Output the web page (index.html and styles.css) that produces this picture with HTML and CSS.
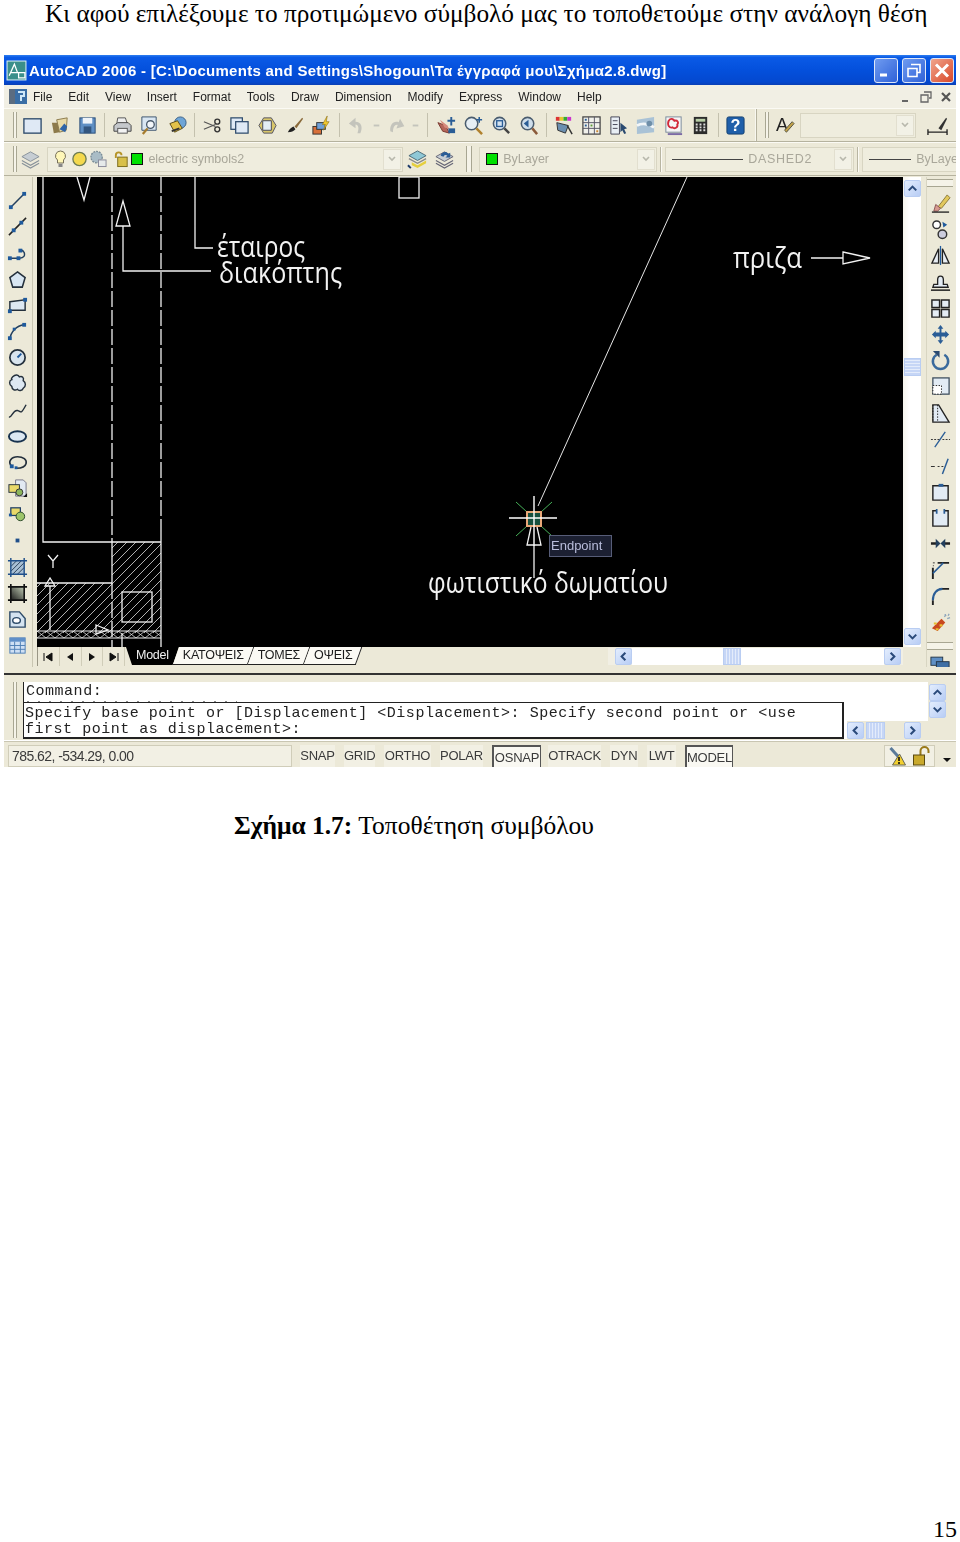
FILE: index.html
```html
<!DOCTYPE html>
<html lang="el">
<head>
    <meta charset="UTF-8">
    <title>Τοποθέτηση συμβόλου</title>
    <link rel="stylesheet" href="styles.css">
</head>
<body>
<div class="page">
    <p class="lead">Κι αφού επιλέξουμε το προτιμώμενο σύμβολό μας το τοποθετούμε στην ανάλογη θέση</p>

    <div class="window">
        <!-- title bar -->
        <div class="titlebar">
            <svg class="app-icon" viewBox="0 0 20 20"><rect x="1" y="1" width="18" height="18" fill="#3b8f8a" stroke="#d8eef0"/><path d="M3 15 8 4l3 8M12 12h6v5h-6zM4 12h8" fill="none" stroke="#fff" stroke-width="1.2"/></svg>
            <span class="title-text">AutoCAD 2006 - [C:\Documents and Settings\Shogoun\Τα έγγραφά μου\Σχήμα2.8.dwg]</span>
            <div class="win-btns">
                <span class="win-btn"><svg viewBox="0 0 22 22"><rect x="5" y="14" width="7" height="3" fill="#fff"/></svg></span>
                <span class="win-btn"><svg viewBox="0 0 22 22"><path d="M8 5h9v8h-3M5 9h9v8H5z" fill="none" stroke="#fff" stroke-width="1.6"/></svg></span>
                <span class="win-btn close"><svg viewBox="0 0 22 22"><path d="M5 5l12 12M17 5 5 17" stroke="#fff" stroke-width="3"/></svg></span>
            </div>
        </div>

        <!-- menu -->
        <div class="menubar">
            <svg class="doc-icon" viewBox="0 0 20 18"><rect x="1" y="1" width="18" height="15" fill="#3a6ea5"/><rect x="1" y="1" width="6" height="15" fill="#5b6c80"/><path d="M10 4h6v4h-3v5" fill="none" stroke="#cfe8f8" stroke-width="2"/></svg>
            <span>File</span><span>Edit</span><span>View</span><span>Insert</span><span>Format</span><span>Tools</span><span>Draw</span><span>Dimension</span><span>Modify</span><span>Express</span><span>Window</span><span>Help</span>
            <div class="doc-btns">
                <svg viewBox="0 0 14 14"><rect x="3" y="10" width="6" height="2" fill="#666"/></svg>
                <svg viewBox="0 0 14 14"><path d="M5 2h7v6h-2M2 5h7v7H2z" fill="none" stroke="#666" stroke-width="1.3"/></svg>
                <svg viewBox="0 0 14 14"><path d="M3 3l8 8M11 3l-8 8" stroke="#555" stroke-width="2.2"/></svg>
            </div>
        </div>

        <!-- standard toolbar -->
        <div class="toolbar tb-standard">
            <span class="grip"></span>
            <span class="tool"><svg viewBox="0 0 22 22"><rect x="2" y="4" width="18" height="15" fill="#dfe9f5" stroke="#2d4a6b" stroke-width="1.4"/></svg></span>
            <span class="tool"><svg viewBox="0 0 22 22"><path d="M2 8h6l2 10-6 1z" fill="#8d7a4a"/><path d="M7 5l11-2-1 13-7 2z" fill="#e8d9a6" stroke="#8a7a4c"/><path d="M10 15l5-6 3 3-2 6z" fill="#2f64a8"/></svg></span>
            <span class="tool"><svg viewBox="0 0 22 22"><rect x="3" y="3" width="16" height="16" fill="#5f8fc4" stroke="#2a4d78"/><rect x="6" y="3" width="10" height="6" fill="#eef3f9"/><rect x="7" y="12" width="8" height="7" fill="#33567f"/></svg></span>
            <span class="tb-sep"></span>
            <span class="tool"><svg viewBox="0 0 22 22"><path d="M6 3h8l2 6H5z" fill="#eee" stroke="#555"/><path d="M2 11l4-3h11l3 3v6H2z" fill="#c5c8cc" stroke="#444"/><rect x="6" y="14" width="10" height="5" fill="#f3f3f3" stroke="#555"/></svg></span>
            <span class="tool"><svg viewBox="0 0 22 22"><path d="M3 2h15v14H3z" fill="#d9e6f2" stroke="#3b536d"/><circle cx="12" cy="10" r="4" fill="#f2f6fa" stroke="#4a5a6c" stroke-width="1.4"/><path d="M9 14l-5 6" stroke="#a67c2e" stroke-width="2.4"/></svg></span>
            <span class="tool"><svg viewBox="0 0 22 22"><circle cx="14" cy="8" r="6" fill="#6fa5d6" stroke="#3a5f86"/><path d="M3 9l8-3 5 8-8 4z" fill="#e3c24a" stroke="#5c4c16"/><path d="M5 17l8-3" stroke="#333" stroke-width="2"/></svg></span>
            <span class="tb-sep"></span>
            <span class="tool"><svg viewBox="0 0 22 22"><path d="M2 7l12 5M2 15l12-5" stroke="#555" stroke-width="1.2"/><circle cx="16" cy="7" r="2.6" fill="none" stroke="#333" stroke-width="1.4"/><circle cx="16" cy="15" r="2.6" fill="none" stroke="#333" stroke-width="1.4"/></svg></span>
            <span class="tool"><svg viewBox="0 0 22 22"><rect x="2" y="3" width="12" height="12" fill="#dfe9f5" stroke="#2d4a6b" stroke-width="1.3"/><rect x="7" y="7" width="13" height="12" fill="#dfe9f5" stroke="#2d4a6b" stroke-width="1.3"/></svg></span>
            <span class="tool"><svg viewBox="0 0 22 22"><path d="M7 3h8l5 8-4 8H7L2 11z" fill="#d8c66a" stroke="#556"/><path d="M6 6h9v10H6z" fill="#e4edf5" stroke="#445"/></svg></span>
            <span class="tool"><svg viewBox="0 0 22 22"><path d="M4 18c2-4 4-5 6-6l2 3c-2 2-4 3-8 3z" fill="#222"/><path d="M11 12l8-9 1 1-7 10z" fill="#8a6a3a"/></svg></span>
            <span class="tool"><svg viewBox="0 0 22 22"><rect x="2" y="12" width="9" height="8" fill="#d8703a" stroke="#333"/><rect x="6" y="8" width="9" height="7" fill="#6fa0d8" stroke="#333"/><path d="M17 1l-5 9h3l-2 6 6-9h-3z" fill="#f1c82e" stroke="#8a6d10" stroke-width=".6"/></svg></span>
            <span class="tb-sep"></span>
            <span class="tool"><svg viewBox="0 0 22 22"><path d="M7 19C4 13 6 7 12 7V3l7 6-7 5v-4c-3 0-4 4-2 9z" transform="matrix(-1 0 0 1 22 0)" fill="#c4c4bc"/></svg></span>
            <span class="tool tiny"><svg viewBox="0 0 16 22"><rect x="5" y="10" width="6" height="2" fill="#c4c4bc"/></svg></span>
            <span class="tool"><svg viewBox="0 0 22 22"><path d="M7 19C4 13 6 7 12 7V3l7 6-7 5v-4c-3 0-4 4-2 9z" fill="#c4c4bc" transform="rotate(20 11 11)"/></svg></span>
            <span class="tool tiny"><svg viewBox="0 0 16 22"><rect x="5" y="10" width="6" height="2" fill="#c4c4bc"/></svg></span>
            <span class="tb-sep narrow"></span>
            <span class="tool"><svg viewBox="0 0 22 22"><path d="M2 8l8 3 4 8-7-2z" fill="#b5655a" stroke="#7a3a30"/><path d="M4 5l8 6 2 4-5-2z" fill="#d68a7c"/><path d="M16 2v9M12 6h8" stroke="#2a5d96" stroke-width="2"/><rect x="13" y="14" width="7" height="5" fill="#2a5d96"/></svg></span>
            <span class="tool"><svg viewBox="0 0 22 22"><circle cx="9" cy="9" r="6.5" fill="#e6eef5" stroke="#4a5c6e" stroke-width="1.6"/><path d="M14 14l6 6" stroke="#b0812e" stroke-width="2.6"/><path d="M17 2v6M14 5h6" stroke="#2a5d96" stroke-width="1.6"/></svg></span>
            <span class="tool"><svg viewBox="0 0 22 22"><circle cx="9" cy="9" r="6.5" fill="#d5e3f0" stroke="#4a5c6e" stroke-width="1.6"/><rect x="6" y="6" width="6" height="6" fill="none" stroke="#2a5d96" stroke-width="1.4"/><path d="M14 14l5 5" stroke="#444" stroke-width="2.6"/></svg></span>
            <span class="tool"><svg viewBox="0 0 22 22"><circle cx="10" cy="9" r="6.5" fill="#cfdeeb" stroke="#4a5c6e" stroke-width="1.6"/><path d="M6 9l5-4v8z" fill="#2a5d96"/><path d="M15 14l5 6" stroke="#8b5a3a" stroke-width="2.6"/></svg></span>
            <span class="tb-sep"></span>
            <span class="tool"><svg viewBox="0 0 22 22"><rect x="3" y="2" width="4" height="4" fill="#d33"/><rect x="7" y="2" width="4" height="4" fill="#e5c82e"/><rect x="11" y="2" width="4" height="4" fill="#3a3"/><rect x="15" y="2" width="4" height="4" fill="#c3c"/><path d="M4 8l12 3-3 8-8-3z" fill="#6b8fb0" stroke="#333"/><path d="M15 11l5 9" stroke="#333" stroke-width="1.6"/></svg></span>
            <span class="tool"><svg viewBox="0 0 22 22"><rect x="2" y="2" width="18" height="18" fill="#f0f0ea" stroke="#444" stroke-width="1.3"/><path d="M2 8h18M2 14h18M8 2v18M14 2v18" stroke="#556"/><rect x="4" y="4" width="2" height="2" fill="#2a5d96"/><rect x="4" y="10" width="2" height="2" fill="#2a5d96"/><rect x="10" y="10" width="2" height="2" fill="#5a9a3a"/><rect x="16" y="16" width="2" height="2" fill="#c83"/></svg></span>
            <span class="tool"><svg viewBox="0 0 22 22"><path d="M3 2h9v18H3z" fill="#e8eef4" stroke="#445"/><path d="M5 6h5M5 10h5M5 14h5" stroke="#445"/><path d="M13 8l7 6-3 1 2 4-2 1-2-4-2 2z" fill="#2a4a70"/></svg></span>
            <span class="tool"><svg viewBox="0 0 22 22"><path d="M2 5l18-3v16L2 20z" fill="#a9c2d6"/><path d="M2 11c6-3 12-2 18 2" stroke="#f2f6f8" stroke-width="3" fill="none"/><circle cx="15" cy="9" r="3" fill="#6e8ea8"/></svg></span>
            <span class="tool"><svg viewBox="0 0 22 22"><rect x="3" y="2" width="16" height="16" fill="#f5f5f5" stroke="#7a8a9a"/><path d="M6 6c2-3 5-2 6 0 3-1 5 2 3 4 1 3-3 5-5 3-3 1-6-2-4-7z" fill="none" stroke="#d22a3a" stroke-width="2"/><path d="M5 20h15" stroke="#7a6aa5" stroke-width="2"/></svg></span>
            <span class="tool"><svg viewBox="0 0 22 22"><rect x="4" y="2" width="14" height="18" fill="#2c2c2c"/><rect x="6" y="4" width="10" height="3" fill="#b9cfa8"/><path d="M6 10h2M10 10h2M14 10h2M6 13h2M10 13h2M14 13h2M6 16h2M10 16h2M14 16h2" stroke="#ddd" stroke-width="2"/></svg></span>
            <span class="tb-sep"></span>
            <span class="tool"><svg viewBox="0 0 22 22"><rect x="2" y="2" width="18" height="18" rx="2" fill="#1f5faa" stroke="#14406f"/><text x="11" y="17" class="help-q">?</text></svg></span>
            <span class="tb-edge"></span>
            <span class="grip second"></span>
            <span class="tool"><svg viewBox="0 0 22 22"><text x="1" y="17" class="a-glyph">A</text><path d="M12 18l8-9-2-2-8 9z" fill="#c2a24a" stroke="#554"/></svg></span>
            <span class="combo blank"><span class="combo-drop"><svg viewBox="0 0 12 12"><path d="M3 4l3 3 3-3" fill="none" stroke="#b8b8ac" stroke-width="1.6"/></svg></span></span>
            <span class="tool last"><svg viewBox="0 0 22 22"><path d="M12 14l8-11 1 1-6 12z" fill="#333"/><path d="M1 18h20M1 15v6M21 15v6" stroke="#222" stroke-width="1.4"/></svg></span>
        </div>

        <!-- layers and properties -->
        <div class="toolbar tb-layers">
            <span class="grip"></span>
            <span class="tool"><svg viewBox="0 0 22 22"><path d="M11 3l9 5-9 5-9-5z" fill="#c6cdd3" stroke="#88929a"/><path d="M2 12l9 5 9-5M2 15l9 5 9-5" fill="none" stroke="#88929a" stroke-width="1.2"/></svg></span>
            <span class="combo layer">
                <svg class="state" viewBox="0 0 16 20"><path d="M8 2a5 5 0 0 1 3 9v3H5v-3a5 5 0 0 1 3-9z" fill="#fff7b8" stroke="#77705a"/><rect x="6" y="15" width="4" height="3" fill="#888"/></svg>
                <svg class="state" viewBox="0 0 18 20"><circle cx="9" cy="10" r="7" fill="#f4d94e" stroke="#6d7c52" stroke-width="1.4"/></svg>
                <svg class="state" viewBox="0 0 18 20"><circle cx="7" cy="8" r="6" fill="#a9bcc6" stroke="#7a8c96" stroke-dasharray="2 1" stroke-width="1.4"/><rect x="9" y="11" width="8" height="7" fill="#e6eaea" stroke="#889"/></svg>
                <svg class="state wide" viewBox="0 0 18 20"><path d="M3 9V6a3 3 0 0 1 6 0" fill="none" stroke="#b69428" stroke-width="2"/><rect x="5" y="8" width="10" height="10" fill="#d8c04a" stroke="#7a6a1a"/></svg>
                <span class="swatch"></span>
                <span class="combo-text">electric symbols2</span>
                <span class="combo-drop"><svg viewBox="0 0 12 12"><path d="M3 4l3 3 3-3" fill="none" stroke="#b8b8ac" stroke-width="1.6"/></svg></span>
            </span>
            <span class="tool"><svg viewBox="0 0 22 22"><path d="M11 2l9 5-9 5-9-5z" fill="#8fc8d6" stroke="#4a6a78"/><path d="M2 10l9 5 9-5" fill="none" stroke="#888" stroke-width="1.4"/><path d="M5 14l6 3 9-5v3l-9 5-6-3z" fill="#e5cf3e"/><path d="M1 17l3 3" stroke="#1c3a6a" stroke-width="2"/></svg></span>
            <span class="tool"><svg viewBox="0 0 22 22"><path d="M11 3l9 5-9 5-9-5z" fill="#c6cdd3" stroke="#667"/><path d="M2 12l9 5 9-5M2 15l9 5 9-5" fill="none" stroke="#667" stroke-width="1.2"/><path d="M7 7c1-4 6-5 8-2l2-1v5h-5l2-2c-1-1-3-1-4 1z" fill="#2a5d96"/></svg></span>
            <span class="grip small"></span>
            <span class="combo prop">
                <span class="swatch"></span>
                <span class="combo-text">ByLayer</span>
                <span class="combo-drop"><svg viewBox="0 0 12 12"><path d="M3 4l3 3 3-3" fill="none" stroke="#b8b8ac" stroke-width="1.6"/></svg></span>
            </span>
            <span class="divider"></span>
            <span class="combo linetype">
                <span class="rule"></span>
                <span class="combo-text spaced">DASHED2</span>
                <span class="combo-drop"><svg viewBox="0 0 12 12"><path d="M3 4l3 3 3-3" fill="none" stroke="#b8b8ac" stroke-width="1.6"/></svg></span>
            </span>
            <span class="divider"></span>
            <span class="combo lineweight">
                <span class="rule short"></span>
                <span class="combo-text">ByLayer</span>
            </span>
        </div>

        <!-- drawing area with both tool columns -->
        <div class="work">
            <div class="side side-left">
                <svg viewBox="0 0 22 22"><path d="M4 18 18 4" stroke="#24405e" stroke-width="1.6"/><rect x="2" y="16" width="4" height="4" fill="#1f5a9c"/><rect x="16" y="2" width="4" height="4" fill="#1f5a9c"/></svg>
                <svg viewBox="0 0 22 22"><path d="M2 20 20 2" stroke="#222" stroke-width="1.6"/><rect x="5" y="13" width="4" height="4" fill="#1f5a9c"/><rect x="13" y="5" width="4" height="4" fill="#1f5a9c"/></svg>
                <svg viewBox="0 0 22 22"><path d="M3 17h10c5 0 6-3 5-6-1-2-3-3-5-2" fill="none" stroke="#24405e" stroke-width="1.5"/><rect x="1" y="15" width="4" height="4" fill="#1f5a9c"/><rect x="10" y="15" width="4" height="4" fill="#1f5a9c"/><rect x="12" y="7" width="4" height="4" fill="#1f5a9c"/></svg>
                <svg viewBox="0 0 22 22"><path d="M11 3l8 6-3 10H6L3 9z" fill="#d8e6f2" stroke="#24303c" stroke-width="1.6"/></svg>
                <svg viewBox="0 0 22 22"><path d="M3 7l16-2v11H3z" fill="#dde8f2" stroke="#24303c" stroke-width="1.5"/><rect x="17" y="3" width="4" height="4" fill="#1f5a9c"/><rect x="1" y="15" width="4" height="4" fill="#1f5a9c"/></svg>
                <svg viewBox="0 0 22 22"><path d="M3 19C4 11 10 5 18 4" fill="none" stroke="#24405e" stroke-width="1.6"/><rect x="1" y="16" width="4" height="4" fill="#1f5a9c"/><rect x="16" y="2" width="4" height="4" fill="#1f5a9c"/><rect x="6" y="7" width="3" height="3" fill="#1f5a9c"/></svg>
                <svg viewBox="0 0 22 22"><circle cx="11" cy="11" r="8" fill="#d8e4ee" stroke="#24303c" stroke-width="1.8"/><path d="M11 11l4-4" stroke="#1f5a9c" stroke-width="2"/></svg>
                <svg viewBox="0 0 22 22"><path d="M6 4c3-3 6-2 7 0 3-1 5 1 4 4 3 2 3 6 0 8-1 3-5 3-6 1-3 2-6 0-6-3-3-2-3-6 0-7-1-1 0-2 1-3z" fill="#dde8f2" stroke="#24303c" stroke-width="1.5"/></svg>
                <svg viewBox="0 0 22 22"><path d="M2 18c4 0 4-8 9-7 4 1 3 5 9-6" fill="none" stroke="#24303c" stroke-width="1.5"/></svg>
                <svg viewBox="0 0 22 22"><ellipse cx="11" cy="11" rx="9" ry="5.5" fill="#dce8f2" stroke="#17324e" stroke-width="2"/></svg>
                <svg viewBox="0 0 22 22"><path d="M5 15C0 10 5 5 11 5s10 3 9 7-6 5-10 5" fill="none" stroke="#24303c" stroke-width="1.7"/><rect x="3" y="13" width="4" height="4" fill="#1f5a9c"/><rect x="8" y="15" width="3" height="3" fill="#1f5a9c"/></svg>
                <svg viewBox="0 0 22 22"><path d="M9 2h8l3 3v14H9z" fill="#e2e9f2" stroke="#778"/><rect x="2" y="7" width="11" height="8" fill="#e9d96a" stroke="#24303c"/><circle cx="13" cy="15" r="3.6" fill="#8cb65c" stroke="#333"/><path d="M17 20h4v-4z" fill="#111"/></svg>
                <svg viewBox="0 0 22 22"><rect x="4" y="4" width="10" height="8" fill="#e9d96a" stroke="#1f3f66" stroke-width="1.3"/><circle cx="14" cy="13" r="4.5" fill="#9dc56a" stroke="#2c4a2c"/><rect x="2" y="10" width="3" height="3" fill="#1f5a9c"/></svg>
                <svg viewBox="0 0 22 22"><rect x="9" y="9" width="4" height="4" fill="#1f4f8a"/></svg>
                <svg viewBox="0 0 22 22"><rect x="4" y="4" width="14" height="14" fill="#a8bfd4"/><path d="M4 10l6-6M4 15l11-11M6 18 18 6M11 18l7-7" stroke="#2a3e55"/><path d="M4 1v20M18 1v20M1 4h20M1 18h20" stroke="#1f4f8a" stroke-width="1.5"/></svg>
                <svg viewBox="0 0 22 22"><defs><linearGradient id="gr" x1="0" y1="1" x2="1" y2="0"><stop offset="0" stop-color="#1a1a1a"/><stop offset="1" stop-color="#c2cdb5"/></linearGradient></defs><rect x="4" y="4" width="14" height="14" fill="url(#gr)"/><path d="M4 1v20M18 1v20M1 4h20M1 18h20" stroke="#111" stroke-width="1.7"/></svg>
                <svg viewBox="0 0 22 22"><path d="M3 3h10l6 7v9H3z" fill="#d4e3f0" stroke="#2c4a68" stroke-width="1.5"/><ellipse cx="10" cy="12" rx="4" ry="3" fill="#fff" stroke="#2c4a68" stroke-width="1.5"/></svg>
                <svg viewBox="0 0 22 22"><rect x="3" y="3" width="16" height="16" fill="#cfe0f4" stroke="#4f7fb5"/><rect x="3" y="3" width="16" height="4" fill="#5f8fc8"/><path d="M3 11h16M3 15h16M8 7v12M14 7v12" stroke="#4f7fb5"/></svg>
                <i class="side-stub"></i>
            </div>

            <div class="main">
                <div class="view">
                    <svg class="drawing" viewBox="37 177 866 470">
                        <defs>
                            <pattern id="hatch" width="9" height="9" patternUnits="userSpaceOnUse" patternTransform="translate(37 542)">
                                <path d="M-2 11 11 -2M-2 2 2 -2M7 11 11 7" stroke="#dcdcdc" stroke-width=".8"/>
                            </pattern>
                            <pattern id="xrow" width="9" height="7" patternUnits="userSpaceOnUse" patternTransform="translate(37 631)">
                                <path d="M0 0 9 7M9 0 0 7" stroke="#ddd" stroke-width=".8"/>
                            </pattern>
                        </defs>

                        <path d="M112 542H161V633H37V583H112Z" fill="url(#hatch)"/>
                        <rect x="37" y="631" width="124" height="7" fill="url(#xrow)"/>
                        <path d="M37 631H161M37 638H161" stroke="#eee"/>
                        <path d="M43 177V542H161M112 542V583H37" class="ln"/>
                        <path d="M112 177V542M112 583V647M161 177V532" class="ln dash"/>
                        <path d="M161 532V647" class="ln"/>
                        <rect x="122" y="592" width="30" height="30" class="ln"/>

                        <!-- left arrows and labels -->
                        <path d="M77 177 84 200 90 177" class="ln"/>
                        <path d="M123 201 116 226H130Z M123 226V271H211M195 177V248H213" class="ln"/>
                        <rect x="399" y="177" width="20" height="21" class="ln"/>
                        <text x="217" y="257" class="lbl" textLength="88" lengthAdjust="spacingAndGlyphs">έταιρος</text>
                        <text x="219" y="283" class="lbl" textLength="123" lengthAdjust="spacingAndGlyphs">διακόπτης</text>

                        <!-- ucs icon -->
                        <path d="M50 578 45 586H55Z M50 586V630M96 625 108 630 96 634ZM122 633V647" class="ln"/>
                        <path d="M48 555 53 561 58 555M53 561V568" class="ln"/>

                        <!-- outlet -->
                        <text x="733" y="268" class="lbl" textLength="69" lengthAdjust="spacingAndGlyphs">πριζα</text>
                        <path d="M811 258H843M843 252 870 258 843 264Z" class="ln"/>

                        <!-- pick line and snap marker -->
                        <path d="M687 177 538 506" class="ln thin"/>
                        <path d="M516 502 527 512M552 502 541 512M516 536 527 526M552 536 541 526" stroke="#46b058"/>
                        <rect x="527" y="512" width="14" height="14" fill="#15503e" stroke="#e8a878" stroke-width="2"/>
                        <path d="M509 518H557M534 496V546" stroke="#fff" stroke-width="1.4"/>
                        <path d="M531 527 527 545H541L537 527M534 545V578" class="ln"/>
                        <text x="428" y="593" class="lbl" textLength="240" lengthAdjust="spacingAndGlyphs">φωτιστικό δωματίου</text>
                        <rect x="549.500" y="535.500" width="62" height="21" fill="#1c2032" stroke="#575d78"/>
                        <text x="551" y="550" class="tip">Endpoint</text>
                    </svg>
                    <div class="vscroll">
                        <span class="sbtn"><svg viewBox="0 0 16 16"><path d="M4 10l4-4 4 4" fill="none" stroke="#2a4a7a" stroke-width="2.2"/></svg></span>
                        <span class="vtrack"><span class="vthumb"></span></span>
                        <span class="sbtn"><svg viewBox="0 0 16 16"><path d="M4 6l4 4 4-4" fill="none" stroke="#2a4a7a" stroke-width="2.2"/></svg></span>
                    </div>
                </div>

                <div class="tabsrow">
                    <div class="tabnav">
                        <span><svg viewBox="0 0 12 12"><path d="M2 2v8M10 2 4 6l6 4z" stroke="#111" fill="#111"/></svg></span>
                        <span><svg viewBox="0 0 12 12"><path d="M9 2 3 6l6 4z" fill="#111"/></svg></span>
                        <span><svg viewBox="0 0 12 12"><path d="M3 2l6 4-6 4z" fill="#111"/></svg></span>
                        <span><svg viewBox="0 0 12 12"><path d="M10 2v8M2 2l6 4-6 4z" stroke="#111" fill="#111"/></svg></span>
                    </div>
                    <span class="tab active">Model</span>
                    <span class="tab">ΚΑΤΟΨΕΙΣ</span>
                    <span class="tab">ΤΟΜΕΣ</span>
                    <span class="tab">ΟΨΕΙΣ</span>
                    <div class="hscroll">
                        <span class="sbtn"><svg viewBox="0 0 16 16"><path d="M10 4 6 8l4 4" fill="none" stroke="#2a4a7a" stroke-width="2.2"/></svg></span>
                        <span class="htrack"><span class="hthumb"></span></span>
                        <span class="sbtn"><svg viewBox="0 0 16 16"><path d="M6 4l4 4-4 4" fill="none" stroke="#2a4a7a" stroke-width="2.2"/></svg></span>
                    </div>
                </div>
            </div>

            <div class="side side-right">
                <i class="side-grip"></i>
                <svg viewBox="0 0 22 22"><path d="M8 15 18 2l3 3-9 11z" fill="#e2c85c" stroke="#8a7a3a"/><path d="M6 12l5 4-3 3H4z" fill="#d89a90" stroke="#855"/><path d="M2 20h18" stroke="#222" stroke-width="1.4"/></svg>
                <svg viewBox="0 0 22 22"><circle cx="7" cy="6" r="4" fill="#fff" stroke="#333" stroke-width="1.5"/><circle cx="13" cy="16" r="4.5" fill="#ccd" stroke="#333" stroke-width="1.5"/><path d="M13 3l5 3-4 3z" fill="#1f5a9c"/></svg>
                <svg viewBox="0 0 22 22"><path d="M9 4 2 19h7zM13 4l7 15h-7z" fill="#e8eef4" stroke="#222" stroke-width="1.4"/><path d="M11 1v20" stroke="#1f5a9c" stroke-width="1.3"/></svg>
                <svg viewBox="0 0 22 22"><path d="M4 13h4V8c0-5 6-5 6 0v5h4l1 3H3z" fill="#e4ecf4" stroke="#222" stroke-width="1.4"/><path d="M1 19h20" stroke="#222" stroke-width="1.6"/></svg>
                <svg viewBox="0 0 22 22"><path d="M2 2h8v8H2zM12 2h8v8h-8zM2 12h8v8H2zM12 12h8v8h-8z" fill="#e4ecf4" stroke="#222" stroke-width="1.5"/></svg>
                <svg viewBox="0 0 22 22"><path d="M11 1l3 4h-2v4h4V7l4 4-4 4v-2h-4v4h2l-3 4-3-4h2v-4H6v2l-4-4 4-4v2h4V5H8z" fill="#2a5d96"/></svg>
                <svg viewBox="0 0 22 22"><path d="M7 5a8 8 0 1 0 8 0" fill="none" stroke="#3a6a9c" stroke-width="2.6"/><path d="M3 1h7v7z" fill="#2a4a70"/></svg>
                <svg viewBox="0 0 22 22"><rect x="3" y="2" width="17" height="17" fill="#e2ebf4" stroke="#3a4a5a" stroke-width="1.3"/><rect x="3" y="10" width="9" height="9" fill="#fff" stroke="#222" stroke-dasharray="1.5 1.5"/></svg>
                <svg viewBox="0 0 22 22"><path d="M3 2h6l11 18H3z" fill="#e2ebf4" stroke="#222" stroke-width="1.4"/><path d="M3 2v18M8 2v18" stroke="#222" stroke-dasharray="1.5 1.5"/></svg>
                <svg viewBox="0 0 22 22"><path d="M5 19 16 3" stroke="#2a5d96" stroke-width="1.4"/><path d="M1 11h9M13 11h8" stroke="#333" stroke-dasharray="2 1.4"/></svg>
                <svg viewBox="0 0 22 22"><path d="M13 20 19 4" stroke="#2a5d96" stroke-width="1.5"/><path d="M1 12h4M8 12h2M12 12h2" stroke="#333" stroke-width="1.2"/></svg>
                <svg viewBox="0 0 22 22"><path d="M3 5h16v15H3z" fill="#e2ebf4" stroke="#222" stroke-width="1.5"/><rect x="9" y="3" width="5" height="3" fill="#2a5d96"/></svg>
                <svg viewBox="0 0 22 22"><path d="M7 4H3v16h16V4h-4" fill="#e2ebf4" stroke="#222" stroke-width="1.5"/><path d="M7 2v5M15 2v5" stroke="#2a5d96" stroke-width="1.8"/></svg>
                <svg viewBox="0 0 22 22"><path d="M1 11h6M15 11h6" stroke="#222" stroke-width="2.4"/><path d="M6 6l5 5-5 5zM16 6l-5 5 5 5z" fill="#24405e"/></svg>
                <svg viewBox="0 0 22 22"><path d="M3 20V8M8 3h12" stroke="#222" stroke-width="2"/><path d="M3 3h2M3 6h1" stroke="#333"/><path d="M3 14 14 3" stroke="#2a5d96" stroke-width="1.6"/></svg>
                <svg viewBox="0 0 22 22"><path d="M3 20v-5M10 3h10" stroke="#222" stroke-width="2"/><path d="M3 15C3 8 7 3 13 3" fill="none" stroke="#2a5d96" stroke-width="2.2"/></svg>
                <svg viewBox="0 0 22 22"><path d="M2 17 12 7l4 4-8 9z" fill="#c9491f"/><path d="M4 12h3M6 18h3M10 14h3" stroke="#e8c030" stroke-width="2.2"/><path d="M15 5l2-2M18 7l3-1M16 2v2M20 2l-1 2" stroke="#8ea6bb" stroke-width="1.4"/></svg>
                <i class="side-grip low"></i>
                <svg class="cascade" viewBox="0 0 22 16"><rect x="1" y="1" width="13" height="9" fill="#5f8fc4" stroke="#234"/><rect x="7" y="6" width="14" height="9" fill="#3f6fa5" stroke="#234"/></svg>
            </div>
        </div>

        <!-- command line -->
        <div class="cmdline">
            <span class="grip tall"></span>
            <div class="cmd-box">
                <div class="cmd-history">Command:<i class="cut-line"></i></div>
                <div class="cmd-input">Specify base point or [Displacement] &lt;Displacement&gt;: Specify second point or &lt;use<br>first point as displacement&gt;:</div>
                <div class="cmd-hbar">
                    <span class="sbtn"><svg viewBox="0 0 16 16"><path d="M10 4 6 8l4 4" fill="none" stroke="#2a4a7a" stroke-width="2.2"/></svg></span>
                    <span class="cmd-thumb"></span>
                    <span class="sbtn end"><svg viewBox="0 0 16 16"><path d="M6 4l4 4-4 4" fill="none" stroke="#2a4a7a" stroke-width="2.2"/></svg></span>
                </div>
            </div>
            <div class="cmd-vbar">
                <span class="sbtn"><svg viewBox="0 0 16 16"><path d="M4 10l4-4 4 4" fill="none" stroke="#2a4a7a" stroke-width="2.2"/></svg></span>
                <span class="sbtn"><svg viewBox="0 0 16 16"><path d="M4 6l4 4 4-4" fill="none" stroke="#2a4a7a" stroke-width="2.2"/></svg></span>
            </div>
        </div>

        <!-- status bar -->
        <div class="statusbar">
            <span class="coords">785.62, -534.29, 0.00</span>
            <span class="st w35">SNAP</span>
            <span class="st w31">GRID</span>
            <span class="st w47">ORTHO</span>
            <span class="st w43">POLAR</span>
            <span class="st w49 on">OSNAP</span>
            <span class="st w53">OTRACK</span>
            <span class="st w28">DYN</span>
            <span class="st w29">LWT</span>
            <span class="st w48 on">MODEL</span>
            <div class="tray">
                <svg viewBox="0 0 20 20"><path d="M3 2l9 10" stroke="#5a7a9a" stroke-width="3"/><path d="M12 8l6 11H5z" fill="#f2cf2e" stroke="#665"/><path d="M11.500 11v4M11.500 16v2" stroke="#111" stroke-width="1.6"/></svg>
                <svg viewBox="0 0 20 20"><path d="M9 9V5a4 4 0 0 1 8 0v2" fill="none" stroke="#9a7a1a" stroke-width="2"/><rect x="2" y="9" width="11" height="10" fill="#c9a92c" stroke="#5a4a10"/></svg>
            </div>
            <svg class="tray-arrow" viewBox="0 0 10 6"><path d="M1 1h8L5 5z" fill="#111"/></svg>
        </div>
    </div>

    <p class="caption"><b>Σχήμα 1.7:</b> Τοποθέτηση συμβόλου</p>
    <div class="pageno">15</div>
</div>
</body>
</html>
```

FILE: styles.css
```css
* {
    box-sizing: border-box;
}

body {
    margin: 0;
    background: #fff;
    font-family: "Liberation Serif", serif;
    color: #000;
}

.page {
    width: 960px;
    height: 1542px;
    display: flex;
    flex-direction: column;
}

.lead {
    margin: 0;
    height: 55px;
    padding-left: 45px;
    font-size: 25.3px;
    line-height: 27px;
    white-space: nowrap;
}

.caption {
    margin: 45px 0 0 234px;
    font-size: 25.5px;
    line-height: 28px;
}

.pageno {
    margin-top: auto;
    padding-right: 3px;
    height: 25px;
    text-align: right;
    font-size: 24px;
    line-height: 24px;
}

/* window */
.window {
    margin-left: 4px;
    width: 952px;
    height: 712px;
    background: #ece9d8;
    font-family: "Liberation Sans", sans-serif;
    display: flex;
    flex-direction: column;
    overflow: hidden;
    filter: blur(0.35px);
}

.titlebar {
    height: 30px;
    flex: none;
    display: flex;
    align-items: center;
    padding: 0 2px;
    background: linear-gradient(#2f7ff0 0, #0a5ae6 8%, #0450dc 50%, #0448cf 90%, #0a3fb5 100%);
    color: #fff;
}

.app-icon {
    width: 21px;
    height: 21px;
    margin-right: 2px;
}

.title-text {
    font-size: 15px;
    font-weight: bold;
    letter-spacing: 0.28px;
    white-space: nowrap;
}

.win-btns {
    margin-left: auto;
    display: flex;
    gap: 4px;
}

.win-btn {
    width: 24px;
    height: 25px;
    border: 1px solid #dfe8f8;
    border-radius: 3px;
    background: linear-gradient(135deg, #6f9bf0, #2f62d8);
}

.win-btn svg {
    display: block;
    width: 22px;
    height: 23px;
}

.win-btn.close {
    background: linear-gradient(135deg, #f0a58c, #d9482a);
}

.menubar {
    height: 23px;
    flex: none;
    display: flex;
    align-items: center;
    gap: 16px;
    padding-left: 4px;
    font-size: 12px;
    color: #222;
    background: #f1efe4;
}

.doc-icon {
    width: 20px;
    height: 18px;
    margin-right: -11px;
}

.doc-btns {
    margin-left: auto;
    display: flex;
    gap: 6px;
    padding-right: 3px;
}

.doc-btns svg {
    width: 14px;
    height: 14px;
}

/* toolbars */
.toolbar {
    height: 34px;
    flex: none;
    display: flex;
    align-items: center;
    border-bottom: 1px solid #b5b29e;
    border-top: 1px solid #fbfaf4;
    background: #ece9d8;
    padding-left: 9px;
    overflow: hidden;
}

.grip {
    width: 4px;
    height: 26px;
    flex: none;
    border-left: 1px solid #a8a692;
    border-right: 1px solid #a8a692;
    background: #f5f3e8;
}

.tool {
    width: 27.4px;
    height: 24px;
    flex: none;
    display: flex;
    align-items: center;
    justify-content: center;
}

.tool svg {
    width: 21px;
    height: 21px;
}

.tool.tiny {
    width: 15px;
    margin: 0 -1.5px;
}

.tool.tiny svg {
    width: 15px;
}

.tb-standard .grip {
    margin-right: 2px;
}

.tb-sep {
    width: 1px;
    height: 24px;
    flex: none;
    margin: 0 3.3px;
    background: #c4c1ae;
}

.tb-sep.narrow {
    margin: 0 5px;
}

.tb-edge {
    width: 2px;
    height: 33px;
    flex: none;
    margin-left: 6px;
    background: #f8f7f0;
    border-right: 1px solid #b5b29e;
}

.grip.second {
    margin-left: 8px;
}

.help-q {
    font: bold 17px "Liberation Sans", sans-serif;
    fill: #fff;
    text-anchor: middle;
}

.a-glyph {
    font: 19px "Liberation Sans", sans-serif;
    fill: #222;
}

.combo {
    height: 25px;
    flex: none;
    display: flex;
    align-items: center;
    background: #efedde;
    border: 1px solid #d8d5c2;
    font-size: 12.5px;
    color: #a9a79a;
    position: relative;
}

.combo.blank {
    width: 116px;
    margin-left: 1px;
    justify-content: flex-end;
}

.tool.last {
    margin-left: 8px;
}

.combo-drop {
    width: 18px;
    height: 21px;
    flex: none;
    margin: 0 1px 0 auto;
    background: #f2f1e6;
    border: 1px solid #e2dfcf;
    display: flex;
    align-items: center;
    justify-content: center;
}

.combo-drop svg {
    width: 12px;
    height: 12px;
}

.combo.layer {
    width: 356px;
    margin-left: 3px;
    padding-left: 4px;
}

.state {
    width: 17px;
    height: 20px;
    flex: none;
    margin-right: 2px;
}

.state.wide {
    margin: 0 1px 0 4px;
}

.swatch {
    width: 12px;
    height: 12px;
    flex: none;
    background: #00e000;
    border: 1px solid #111;
}

.combo-text {
    margin-left: 5px;
    white-space: nowrap;
}

.grip.small {
    margin: 0 7px 0 8px;
    width: 6px;
}

.combo.prop {
    width: 178px;
    padding-left: 6px;
}

.divider {
    width: 2px;
    height: 25px;
    flex: none;
    margin: 0 3px;
    border-left: 1px solid #b8b5a2;
    border-right: 1px solid #fbfaf4;
}

.combo.linetype {
    width: 189px;
    padding-left: 6px;
}

.combo.lineweight {
    width: 100px;
    padding-left: 6px;
}

.rule {
    width: 71px;
    height: 1px;
    flex: none;
    background: #444;
}

.rule.short {
    width: 42px;
}

.spaced {
    letter-spacing: 0.7px;
}

/* drawing area */
.work {
    height: 491px;
    flex: none;
    display: flex;
    padding-top: 1px;
    background: #ece9d8;
}

.side {
    flex: none;
    display: flex;
    flex-direction: column;
    align-items: center;
    background: #ece9d8;
    overflow: hidden;
}

.side svg {
    width: 21px;
    height: 21px;
    flex: none;
    margin-bottom: 5.2px;
}

.side-left {
    width: 29px;
    padding: 13px 2px 0 0;
    margin-right: 4px;
    border-right: 1px solid #c9c6b2;
}

.side-stub {
    width: 3px;
    height: 3px;
    margin-top: 9px;
    background: #111;
    flex: none;
}

.main {
    width: 884px;
    flex: none;
    display: flex;
    flex-direction: column;
}

.view {
    height: 470px;
    flex: none;
    display: flex;
}

.drawing {
    width: 866px;
    height: 470px;
    flex: none;
    background: #000;
}

.ln {
    fill: none;
    stroke: #f2f2f2;
    stroke-width: 1.3;
}

.ln.dash {
    stroke-dasharray: 16 3;
}

.ln.thin {
    stroke-width: 1;
    stroke: #e6e6e6;
}

.lbl {
    font-family: "Open Sans", sans-serif;
    font-size: 29px;
    font-weight: 400;
    fill: #f2f2f2;
}

.tip {
    font-family: "Liberation Sans", sans-serif;
    font-size: 13px;
    fill: #b9bddb;
}

.vscroll {
    width: 18px;
    flex: none;
    display: flex;
    flex-direction: column;
    padding: 3px 0 2px 1px;
    background: linear-gradient(90deg, #f5f4ec, #fff 40%);
}

.vtrack {
    flex: 1;
    position: relative;
}

.vthumb {
    position: absolute;
    left: 0;
    top: 161px;
    width: 17px;
    height: 18px;
    border: 1px solid #b9cdf2;
    background: repeating-linear-gradient(0deg, #c6d6f6 0 2px, #e4ecfb 2px 3px);
}

.side-right {
    width: 30px;
    margin-left: 5px;
    padding: 2px 3px 0 0;
    border-left: 1px solid #d8d5c2;
}

.side-grip {
    width: 26px;
    height: 8px;
    flex: none;
    margin-bottom: 6px;
    border-top: 1px solid #a8a692;
    border-bottom: 1px solid #a8a692;
    background: #f5f3e8;
}

.side-grip.low {
    margin: 4px 0 6px;
}

.side-right .cascade {
    height: 15px;
    width: 20px;
}

.sbtn {
    width: 17px;
    height: 17px;
    flex: none;
    display: block;
    border: 1px solid #b9cdf2;
    border-radius: 2px;
    background: linear-gradient(135deg, #e3edfd, #b8cdf5);
}

.sbtn svg {
    display: block;
    width: 15px;
    height: 15px;
}

/* layout tabs */
.tabsrow {
    height: 20px;
    flex: none;
    display: flex;
    align-items: flex-start;
    font-size: 12.5px;
    color: #1a1a1a;
    background: #ece9d8;
    position: relative;
    isolation: isolate;
}

.tabnav {
    display: flex;
    width: 88px;
    height: 19px;
    border-left: 1px solid #999685;
}

.tabnav span {
    width: 22px;
    height: 19px;
    display: flex;
    align-items: center;
    justify-content: center;
    border-right: 1px solid #d0cdb9;
}

.tabnav svg {
    width: 12px;
    height: 12px;
}

.tab {
    height: 18px;
    padding: 0 7px;
    line-height: 17px;
    letter-spacing: -0.25px;
    white-space: nowrap;
    position: relative;
}

.tab::before {
    content: "";
    position: absolute;
    inset: 0;
    z-index: -1;
    background: #fbfaf4;
    border-right: 1px solid #222;
    border-bottom: 1px solid #222;
    transform: skewX(-20deg);
}

.tab.active {
    margin-left: 4px;
    color: #f0f0f0;
}

.tab.active::before {
    inset: 0 -3px;
    background: #000;
    border: 0;
    transform: none;
    clip-path: polygon(0 0, 100% 0, calc(100% - 6px) 100%, 6px 100%);
}

.hscroll {
    position: absolute;
    left: 571px;
    top: 1px;
    width: 295px;
    display: flex;
    align-items: center;
    padding-left: 7px;
    background: #f1efe4;
}

.htrack {
    width: 252px;
    height: 17px;
    flex: none;
    background: #fff;
    position: relative;
}

.hthumb {
    position: absolute;
    left: 91px;
    top: 0;
    width: 18px;
    height: 17px;
    border: 1px solid #b9cdf2;
    background: repeating-linear-gradient(90deg, #c6d6f6 0 2px, #e4ecfb 2px 3px);
}

/* command line */
.cmdline {
    height: 68px;
    flex: none;
    display: flex;
    padding: 7px 0 0 9px;
    border-top: 2px solid #333;
    margin-top: 6px;
    background: #ece9d8;
    border-bottom: 1px solid #fff;
}

.grip.tall {
    height: 56px;
    margin-right: 6px;
}

.cmd-box {
    width: 905px;
    height: 57px;
    flex: none;
    background: #fff;
    position: relative;
    font-family: "Liberation Mono", monospace;
    font-size: 15px;
    letter-spacing: 0.52px;
    line-height: 16px;
    color: #222;
}

.cmd-history {
    height: 20px;
    padding: 2px 0 0 2px;
    position: relative;
    border-left: 1px solid #222;
}

.cut-line {
    position: absolute;
    left: 3px;
    bottom: 0;
    width: 210px;
    height: 1px;
    background: repeating-linear-gradient(90deg, #888 0 2px, #fff 2px 11px);
}

.cmd-input {
    width: 821px;
    height: 37px;
    padding: 3px 0 0 1px;
    background: #fff;
    border: 1px solid #222;
    border-width: 1px 2px 2px 1px;
    white-space: nowrap;
    position: absolute;
    left: 0;
    top: 20px;
}

.cmd-hbar {
    position: absolute;
    left: 824px;
    top: 39px;
    width: 81px;
    height: 18px;
    display: flex;
    align-items: center;
    background: #ece9d8;
}

.cmd-thumb {
    width: 19px;
    height: 17px;
    margin-left: 2px;
    border: 1px solid #b9cdf2;
    background: repeating-linear-gradient(90deg, #c6d6f6 0 2px, #e4ecfb 2px 3px);
}

.sbtn.end {
    margin-left: 19px;
}

.cmd-vbar {
    width: 17px;
    margin-left: 1px;
    padding-top: 2px;
    display: flex;
    flex-direction: column;
}

/* status bar */
.statusbar {
    flex: 1;
    display: flex;
    align-items: flex-end;
    padding-left: 4px;
    padding-top: 3px;
    font-size: 13px;
    color: #3a3a3a;
    border-top: 1px solid #c9c6b2;
    background: #ece9d8;
    position: relative;
}

.coords {
    width: 284px;
    height: 22px;
    flex: none;
    margin-right: 8px;
    padding-left: 3px;
    font-size: 14px;
    letter-spacing: -0.55px;
    line-height: 21px;
    background: #f2f0e4;
    border: 1px solid #d0cdb9;
}

.st {
    height: 22px;
    flex: none;
    margin-right: 9px;
    text-align: center;
    line-height: 22px;
    white-space: nowrap;
    background: #f2f0e4;
    letter-spacing: -0.25px;
}

.st.on {
    background: #f9f8f2;
    border: 1px solid #555;
    border-width: 2px 1px 0 2px;
    margin-right: 7px;
    line-height: 21px;
}

.w28 { width: 28px; }
.w29 { width: 29px; }
.w31 { width: 31px; }
.w35 { width: 35px; }
.w43 { width: 43px; }
.w47 { width: 47px; }
.w48 { width: 48px; }
.w49 { width: 49px; }
.w53 { width: 53px; }

.tray {
    position: absolute;
    right: 21px;
    bottom: 0;
    width: 51px;
    height: 22px;
    display: flex;
    justify-content: center;
    gap: 3px;
    background: #f2f0e4;
    border: 1px solid #d0cdb9;
}

.tray svg {
    width: 21px;
    height: 20px;
}

.tray-arrow {
    position: absolute;
    right: 4px;
    bottom: 4px;
    width: 10px;
    height: 6px;
}
```
